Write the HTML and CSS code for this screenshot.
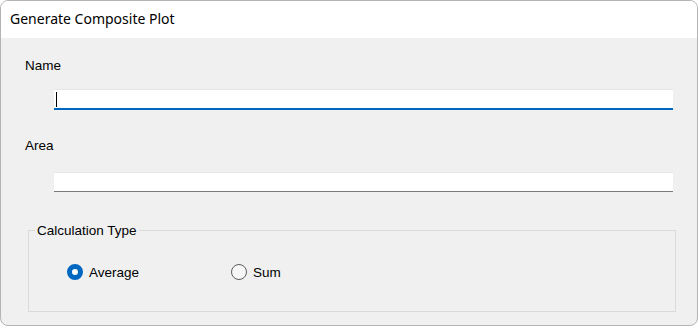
FILE: index.html
```html
<!DOCTYPE html>
<html>
<head>
<meta charset="utf-8">
<link rel="stylesheet" href="styles.css">
</head>
<body>
<div class="window">
  <div class="titlebar">Generate Composite Plot</div>
  <div class="content">
    <div class="label">Name</div>
    <div class="input focused"><span class="caret"></span></div>
    <div class="label area-label">Area</div>
    <div class="input plain"></div>
    <fieldset class="group">
      <legend>Calculation Type</legend>
      <div class="radios">
        <div class="radio first"><span class="dot checked"></span><span>Average</span></div>
        <div class="radio"><span class="dot"></span><span>Sum</span></div>
      </div>
    </fieldset>
  </div>
</div>
</body>
</html>
```
FILE: styles.css
```css
html, body {
  margin: 0;
  padding: 0;
  background: #ffffff;
}
body {
  width: 699px;
  height: 327px;
  overflow: hidden;
  font-family: "Liberation Sans", Arial, sans-serif;
  font-size: 13.5px;
  color: #000;
}
.window {
  box-sizing: border-box;
  width: 698px;
  height: 326px;
  border: 1px solid #b4b4b4;
  border-radius: 8px;
  overflow: hidden;
  background: #f0f0f0;
}
.titlebar {
  box-sizing: border-box;
  height: 37px;
  background: #ffffff;
  font-family: "Noto Sans", "Segoe UI", sans-serif;
  font-size: 14px;
  line-height: 20px;
  padding: 8px 0 0 9px;
  color: #000;
}
.content {
  padding: 20px 0 0 24px;
}
.label {
  line-height: 16px;
  height: 16px;
}
.input {
  box-sizing: border-box;
  margin: 15px 0 0 29px;
  width: 619px;
  background: #fff;
  border-top: 1px solid #e6e6e6;
  position: relative;
}
.input.focused {
  height: 21px;
  border-bottom: 2px solid #0067c0;
}
.caret {
  position: absolute;
  left: 2px;
  top: 2px;
  width: 1px;
  height: 15px;
  background: #000;
}
.area-label {
  margin-top: 28px;
}
.input.plain {
  margin-top: 18px;
  height: 20px;
  border-bottom: 1px solid #7a7a7a;
}
.group {
  margin: 31px 0 0 3px;
  padding: 0 0 31px 0;
  width: 648px;
  box-sizing: border-box;
  border: 1px solid #dadada;
  min-width: 0;
}
.group legend {
  margin-left: 6px;
  padding: 0 2px;
  line-height: 15px;
}
.radios {
  display: flex;
  margin-top: 26px;
  padding-left: 38px;
  height: 16px;
  align-items: center;
}
.radio {
  display: flex;
  align-items: center;
  gap: 6px;
  line-height: 15px;
}
.radio.first {
  width: 164px;
}
.dot {
  box-sizing: border-box;
  width: 16px;
  height: 16px;
  border-radius: 50%;
  border: 1px solid #5c5c5c;
  background: #f7f7f7;
  flex: none;
}
.dot.checked {
  border: 5px solid #0067c0;
  background: #ffffff;
}
```
